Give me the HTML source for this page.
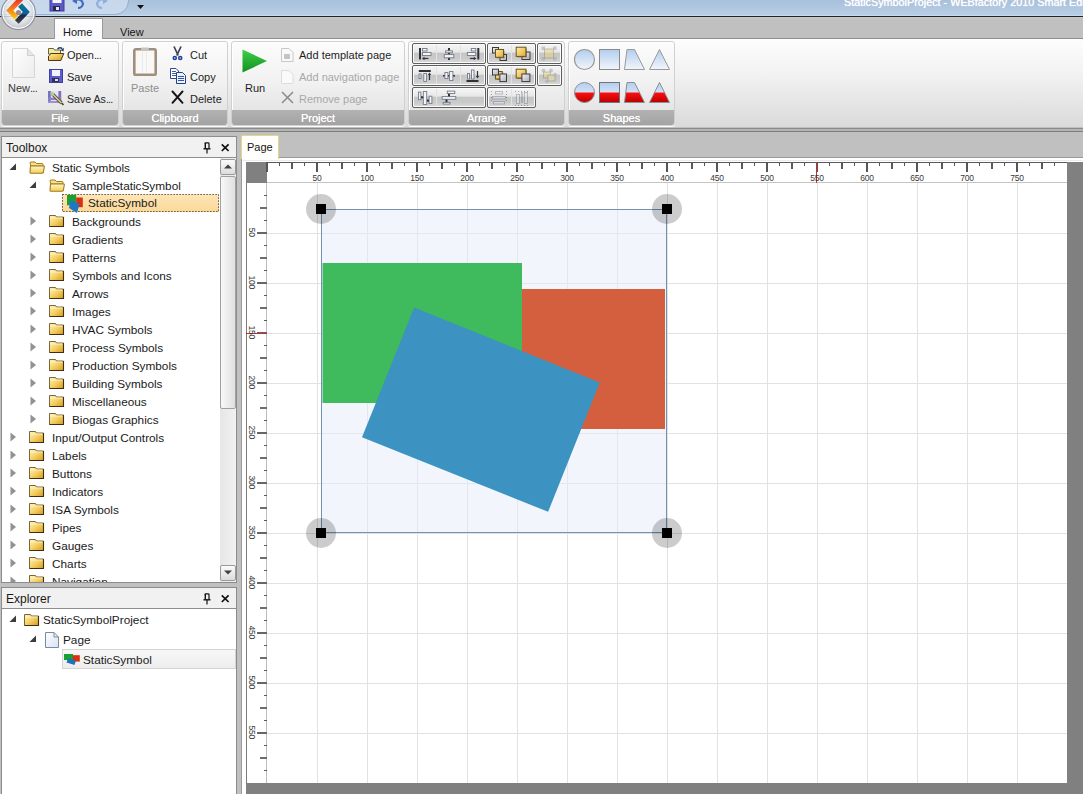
<!DOCTYPE html><html><head><meta charset="utf-8"><style>
*{margin:0;padding:0;box-sizing:border-box}
html,body{width:1083px;height:794px;overflow:hidden;background:#c0c0c0;font-family:"Liberation Sans",sans-serif;position:relative}
.ab{position:absolute}
.t{position:absolute;white-space:nowrap;line-height:1;color:#1e1e1e}
</style></head><body>
<div class="ab" style="left:0;top:0;width:1083px;height:16px;background:linear-gradient(#a9c0da,#b9cfe7)"></div>
<div class="ab" style="left:0;top:15px;width:1083px;height:1px;background:#c6d9ee"></div>
<div class="ab" style="left:0;top:16px;width:1083px;height:1px;background:#1f252b"></div>
<div class="t" style="left:844px;top:-3.5px;font-size:10.8px;color:#fff;text-shadow:0 0 1px #fff">StaticSymbolProject - WEBfactory 2010 Smart Editor</div>
<div class="ab" style="left:-20px;top:-14px;width:149px;height:29px;border:1px solid #98aec9;border-radius:14px;background:linear-gradient(#c4d5ea,#c9d9ee)"></div>
<svg class="ab" style="left:49px;top:-3px" width="16" height="15" viewBox="0 0 16 15">
<rect x="1" y="0" width="14" height="14" fill="#5b5bc8" stroke="#3c3c9c"/>
<rect x="3.5" y="0" width="9" height="6" fill="#f4f4fb"/>
<rect x="4" y="9" width="7" height="5" fill="#2a2a50"/><rect x="7" y="10" width="3" height="3" fill="#e8e8f0"/></svg>
<svg class="ab" style="left:72px;top:-2px" width="14" height="12" viewBox="0 0 14 12">
<path d="M3 2 Q10 0 11 6 Q10 10 6 10" fill="none" stroke="#3e6fc4" stroke-width="2.2"/><path d="M0 3 L5 0 L5 6 Z" fill="#3e6fc4"/></svg>
<svg class="ab" style="left:94px;top:-2px" width="14" height="12" viewBox="0 0 14 12">
<path d="M11 2 Q4 0 3 6 Q4 10 8 10" fill="none" stroke="#8fb0da" stroke-width="2.2"/><path d="M14 3 L9 0 L9 6 Z" fill="#8fb0da"/></svg>
<svg class="ab" style="left:137px;top:5px" width="7" height="4"><path d="M0 0 H7 L3.5 4Z" fill="#101010"/></svg>
<div class="ab" style="left:0;top:17px;width:1083px;height:22px;background:linear-gradient(#c8c8c8,#c0c0c0 3px,#c0c0c0)"></div>
<div class="ab" style="left:0;top:38px;width:1083px;height:1px;background:#8e8e8e"></div>
<div class="ab" style="left:54px;top:18px;width:49px;height:23px;background:linear-gradient(#fefefe,#f9f9f9);border:1px solid #9a9a9a;border-bottom:none;border-radius:1px 1px 0 0"></div>
<div class="t" style="left:63px;top:27px;font-size:11px;color:#151515">Home</div>
<div class="t" style="left:120px;top:27px;font-size:11px;color:#151515">View</div>
<svg class="ab" style="left:0;top:0" width="40" height="34" viewBox="0 0 40 34">
<defs><radialGradient id="lg" cx="50%" cy="45%" r="55%"><stop offset="0" stop-color="#ffffff" stop-opacity=".95"/><stop offset="0.6" stop-color="#eeeff2" stop-opacity=".8"/><stop offset="1" stop-color="#b9bec6" stop-opacity=".85"/></radialGradient>
<linearGradient id="lo" x1="0" y1="0" x2="0" y2="1"><stop offset="0" stop-color="#e8262a"/><stop offset=".45" stop-color="#f26d1f"/><stop offset="1" stop-color="#f9c20a"/></linearGradient>
<linearGradient id="lb" x1="0" y1="0" x2="0" y2="1"><stop offset="0" stop-color="#08768c"/><stop offset=".5" stop-color="#0e5fa0"/><stop offset=".62" stop-color="#1c2a44"/><stop offset="1" stop-color="#3a3f4a"/></linearGradient></defs>
<circle cx="18.4" cy="12.6" r="17" fill="url(#lg)" stroke="#8f959e" stroke-width="1.2"/>
<circle cx="18.4" cy="12.6" r="15.8" fill="none" stroke="#ffffff" stroke-width="1"/>
<polyline points="22,-2.5 9.8,10.5 16.3,17.5" fill="none" stroke="url(#lo)" stroke-width="5.2" stroke-linejoin="miter"/>
<polyline points="20,5 26.3,12 16.8,22" fill="none" stroke="url(#lb)" stroke-width="5.2" stroke-linejoin="miter"/>
<circle cx="18.5" cy="12.5" r="2.6" fill="#9c8a92"/>
</svg>
<div class="ab" style="left:0;top:39px;width:1083px;height:88px;background:linear-gradient(#fdfdfd,#f2f2f2 40%,#dadada)"></div>
<div class="ab" style="left:0;top:128px;width:1083px;height:1px;background:#8a8a8a"></div>
<div class="ab" style="left:0;top:129px;width:1083px;height:2px;background:#b4b4b4"></div>
<div class="ab" style="left:0;top:131px;width:1083px;height:1px;background:#7e7e7e"></div>
<div class="ab" style="left:0;top:132px;width:1083px;height:26px;background:#c0c0c0"></div>
<div class="ab" style="left:1px;top:41px;width:118px;height:85px;border-radius:3px;background:linear-gradient(#fcfcfc,#f1f1f1 50%,#dedede);border:1px solid #d0d0d0;box-shadow:1px 1px 0 #fff inset,0 1px 0 #fff"></div>
<div class="ab" style="left:2px;top:110px;width:116px;height:15px;border-radius:0 0 3px 3px;background:linear-gradient(#b2b2b2,#a3a3a3)"></div>
<div class="t" style="left:1px;width:118px;text-align:center;top:113px;font-size:11px;color:#fff;text-shadow:0 0 .6px #fff">File</div>
<div class="ab" style="left:122px;top:41px;width:106px;height:85px;border-radius:3px;background:linear-gradient(#fcfcfc,#f1f1f1 50%,#dedede);border:1px solid #d0d0d0;box-shadow:1px 1px 0 #fff inset,0 1px 0 #fff"></div>
<div class="ab" style="left:123px;top:110px;width:104px;height:15px;border-radius:0 0 3px 3px;background:linear-gradient(#b2b2b2,#a3a3a3)"></div>
<div class="t" style="left:122px;width:106px;text-align:center;top:113px;font-size:11px;color:#fff;text-shadow:0 0 .6px #fff">Clipboard</div>
<div class="ab" style="left:231px;top:41px;width:174px;height:85px;border-radius:3px;background:linear-gradient(#fcfcfc,#f1f1f1 50%,#dedede);border:1px solid #d0d0d0;box-shadow:1px 1px 0 #fff inset,0 1px 0 #fff"></div>
<div class="ab" style="left:232px;top:110px;width:172px;height:15px;border-radius:0 0 3px 3px;background:linear-gradient(#b2b2b2,#a3a3a3)"></div>
<div class="t" style="left:231px;width:174px;text-align:center;top:113px;font-size:11px;color:#fff;text-shadow:0 0 .6px #fff">Project</div>
<div class="ab" style="left:408px;top:41px;width:157px;height:85px;border-radius:3px;background:linear-gradient(#fcfcfc,#f1f1f1 50%,#dedede);border:1px solid #d0d0d0;box-shadow:1px 1px 0 #fff inset,0 1px 0 #fff"></div>
<div class="ab" style="left:409px;top:110px;width:155px;height:15px;border-radius:0 0 3px 3px;background:linear-gradient(#b2b2b2,#a3a3a3)"></div>
<div class="t" style="left:408px;width:157px;text-align:center;top:113px;font-size:11px;color:#fff;text-shadow:0 0 .6px #fff">Arrange</div>
<div class="ab" style="left:568px;top:41px;width:107px;height:85px;border-radius:3px;background:linear-gradient(#fcfcfc,#f1f1f1 50%,#dedede);border:1px solid #d0d0d0;box-shadow:1px 1px 0 #fff inset,0 1px 0 #fff"></div>
<div class="ab" style="left:569px;top:110px;width:105px;height:15px;border-radius:0 0 3px 3px;background:linear-gradient(#b2b2b2,#a3a3a3)"></div>
<div class="t" style="left:568px;width:107px;text-align:center;top:113px;font-size:11px;color:#fff;text-shadow:0 0 .6px #fff">Shapes</div>
<svg class="ab" style="left:12px;top:48px" width="23" height="30" viewBox="0 0 23 30">
<defs><linearGradient id="pg" x1="0" y1="0" x2="1" y2="1"><stop offset="0" stop-color="#ffffff"/><stop offset="1" stop-color="#ececec"/></linearGradient></defs>
<path d="M0.5 0.5 H15.5 L22.5 7.5 V29.5 H0.5 Z" fill="url(#pg)" stroke="#d6d6d6"/><path d="M15.5 0.5 V7.5 H22.5" fill="#e6e6e6" stroke="#d0d0d0"/></svg>
<div class="t" style="left:8px;top:83px;font-size:11px;color:#3a3a3a">New<span style="letter-spacing:-0.7px">...</span></div>
<svg class="ab" style="left:48px;top:47px" width="17" height="15" viewBox="0 0 17 15">
<defs><linearGradient id="ofg" x1="0" y1="0" x2="1" y2="1"><stop offset="0" stop-color="#fff09a"/><stop offset="1" stop-color="#dc9c1c"/></linearGradient></defs>
<path d="M0.5 1.5 H5.5 L6.5 3 H12.5 V7 H0.5Z" fill="#eeeaa8" stroke="#6e6034" stroke-width="1"/>
<path d="M3.2 6.5 H15.8 L12.8 13.5 H0.5 V9Z" fill="url(#ofg)" stroke="#4a3816" stroke-width="1"/>
<path d="M9.5 2 Q12 -0.3 14.2 1.6" fill="none" stroke="#2c3c70" stroke-width="1.4"/><path d="M15.8 0.8 L15.6 4.6 L12.4 3.2Z" fill="#2c3c70"/></svg>
<div class="t" style="left:67px;top:50px;font-size:11px">Open<span style="letter-spacing:-0.7px">...</span></div>
<svg class="ab" style="left:49px;top:69px" width="14" height="14" viewBox="0 0 14 14">
<rect x="0.5" y="0.5" width="13" height="13" fill="#5c5cd0" stroke="#4040a0"/><rect x="3" y="1" width="8" height="6" fill="#f2f2fb"/>
<rect x="3" y="9" width="7" height="4" fill="#303050"/><rect x="6" y="10" width="3" height="2" fill="#ddd"/></svg>
<div class="t" style="left:67px;top:72px;font-size:11px">Save</div>
<svg class="ab" style="left:48px;top:90px" width="16" height="16" viewBox="0 0 16 16">
<rect x="0" y="1" width="13" height="12" fill="#e6e4f4"/><rect x="0" y="1" width="2.8" height="12" fill="#7a70c4"/><rect x="10.4" y="1" width="2.8" height="12" fill="#7a70c4"/>
<rect x="0" y="7.6" width="13.2" height="2.4" fill="#8c82cc"/><rect x="0" y="11" width="13.2" height="2" fill="#9890d4"/>
<path d="M4.5 4 L13.5 13" stroke="#5a4a30" stroke-width="3.2"/><path d="M4.5 4 L13.5 13" stroke="#d8d0a0" stroke-width="1.6"/>
<path d="M3 2.5 L5.5 5" stroke="#a8d090" stroke-width="3"/><path d="M13.5 13 L15.5 15" stroke="#3a4a2a" stroke-width="1.6"/></svg>
<div class="t" style="left:67px;top:94px;font-size:10.6px">Save As<span style="letter-spacing:-0.7px">...</span></div>
<svg class="ab" style="left:133px;top:46px" width="24" height="30" viewBox="0 0 24 30">
<rect x="1.3" y="3.3" width="21.4" height="25.6" rx="1.5" fill="#fbf8f4" stroke="#9d9080" stroke-width="2.6"/><rect x="9" y="6" width="1" height="21" fill="#e2ecf8"/><rect x="13" y="6" width="1" height="21" fill="#e2ecf8"/>
<rect x="8" y="1.5" width="8" height="2.5" rx="1" fill="#c4c4c4"/></svg>
<div class="t" style="left:131px;top:83px;font-size:11px;color:#8e8e8e">Paste</div>
<svg class="ab" style="left:171px;top:46px" width="13" height="16" viewBox="0 0 13 16">
<path d="M3 0.5 L7.2 9.5 M10 0.5 L5.8 9.5" stroke="#3c3f55" stroke-width="1.7"/><circle cx="3.8" cy="12" r="2.3" fill="#22409c"/><circle cx="9.2" cy="12" r="2.3" fill="#22409c"/><circle cx="3.8" cy="12" r=".8" fill="#dde6f8"/><circle cx="9.2" cy="12" r=".8" fill="#dde6f8"/></svg>
<div class="t" style="left:190px;top:50px;font-size:11px">Cut</div>
<svg class="ab" style="left:170px;top:68px" width="16" height="16" viewBox="0 0 16 16">
<path d="M0.5 0.5 H6 L8.5 3 V10.5 H0.5Z" fill="#fff" stroke="#2c4a8c"/><path d="M2 3.5 H6 M2 5.5 H6 M2 7.5 H6" stroke="#2c4a8c" stroke-width=".9"/>
<path d="M6.5 4.5 H12.5 L15.5 7.5 V15.5 H6.5Z" fill="#eef3fb" stroke="#1f3f8f"/><path d="M8 8.5 H14 M8 10.5 H14 M8 12.5 H14" stroke="#1f3f8f" stroke-width=".9"/></svg>
<div class="t" style="left:190px;top:72px;font-size:11px">Copy</div>
<svg class="ab" style="left:171px;top:90px" width="13" height="14" viewBox="0 0 13 14">
<path d="M1.5 1.5 L11.5 12.8 M11.5 1.5 L1.5 12.8" stroke="#151515" stroke-width="1.9" stroke-linecap="round"/></svg>
<div class="t" style="left:190px;top:94px;font-size:11px">Delete</div>
<svg class="ab" style="left:242px;top:49px" width="26" height="25" viewBox="0 0 26 25">
<defs><linearGradient id="rg" x1="0" y1="0" x2="0" y2="1"><stop offset="0" stop-color="#3fcf4a"/><stop offset="1" stop-color="#11901c"/></linearGradient></defs>
<path d="M0.5 0.5 L25 12 L0.5 23.5Z" fill="url(#rg)"/></svg>
<div class="t" style="left:245px;top:83px;font-size:11px">Run</div>
<svg class="ab" style="left:281px;top:47px" width="13" height="15" viewBox="0 0 13 15">
<path d="M0.5 1.5 H8 L12 5.5 V14.5 H0.5Z" fill="#fafafa" stroke="#c8c8c8"/><rect x="3" y="7" width="6" height="5" fill="#c4c4c4"/></svg>
<div class="t" style="left:299px;top:50px;font-size:11px">Add template page</div>
<svg class="ab" style="left:281px;top:69px" width="13" height="15" viewBox="0 0 13 15">
<path d="M0.5 1.5 H8 L12 5.5 V14.5 H0.5Z" fill="#fafafa" stroke="#dcdcdc"/></svg>
<div class="t" style="left:299px;top:72px;font-size:11px;color:#a8a8a8">Add navigation page</div>
<svg class="ab" style="left:281px;top:91px" width="13" height="13" viewBox="0 0 13 13">
<path d="M1 1 L12 12 M12 1 L1 12" stroke="#8a8a8a" stroke-width="1.5"/></svg>
<div class="t" style="left:299px;top:94px;font-size:11px;color:#a8a8a8">Remove page</div>
<div class="ab" style="left:412px;top:43px;width:74px;height:21px;border:1px solid #5e5e5e;border-radius:2px;background:linear-gradient(#f6f6f6 0%,#e8e8e8 42%,#c6c6c6 50%,#cacaca 75%,#dadada 100%);box-shadow:inset 0 0 0 1px #fafafa"></div>
<div class="ab" style="left:436px;top:45px;width:1px;height:17px;background:#e2e2e2"></div>
<div class="ab" style="left:460px;top:45px;width:1px;height:17px;background:#e2e2e2"></div>
<div class="ab" style="left:412px;top:65px;width:74px;height:21px;border:1px solid #5e5e5e;border-radius:2px;background:linear-gradient(#f6f6f6 0%,#e8e8e8 42%,#c6c6c6 50%,#cacaca 75%,#dadada 100%);box-shadow:inset 0 0 0 1px #fafafa"></div>
<div class="ab" style="left:436px;top:67px;width:1px;height:17px;background:#e2e2e2"></div>
<div class="ab" style="left:460px;top:67px;width:1px;height:17px;background:#e2e2e2"></div>
<div class="ab" style="left:412px;top:87px;width:74px;height:21px;border:1px solid #5e5e5e;border-radius:2px;background:linear-gradient(#f6f6f6 0%,#e8e8e8 42%,#c6c6c6 50%,#cacaca 75%,#dadada 100%);box-shadow:inset 0 0 0 1px #fafafa"></div>
<div class="ab" style="left:436px;top:89px;width:1px;height:17px;background:#e2e2e2"></div>
<div class="ab" style="left:487px;top:43px;width:49px;height:21px;border:1px solid #5e5e5e;border-radius:2px;background:linear-gradient(#f6f6f6 0%,#e8e8e8 42%,#c6c6c6 50%,#cacaca 75%,#dadada 100%);box-shadow:inset 0 0 0 1px #fafafa"></div>
<div class="ab" style="left:511px;top:45px;width:1px;height:17px;background:#e2e2e2"></div>
<div class="ab" style="left:487px;top:65px;width:49px;height:21px;border:1px solid #5e5e5e;border-radius:2px;background:linear-gradient(#f6f6f6 0%,#e8e8e8 42%,#c6c6c6 50%,#cacaca 75%,#dadada 100%);box-shadow:inset 0 0 0 1px #fafafa"></div>
<div class="ab" style="left:511px;top:67px;width:1px;height:17px;background:#e2e2e2"></div>
<div class="ab" style="left:487px;top:87px;width:49px;height:21px;border:1px solid #5e5e5e;border-radius:2px;background:linear-gradient(#f6f6f6 0%,#e8e8e8 42%,#c6c6c6 50%,#cacaca 75%,#dadada 100%);box-shadow:inset 0 0 0 1px #fafafa"></div>
<div class="ab" style="left:511px;top:89px;width:1px;height:17px;background:#e2e2e2"></div>
<div class="ab" style="left:537px;top:43px;width:25px;height:21px;border:1px solid #5e5e5e;border-radius:2px;background:linear-gradient(#f6f6f6 0%,#e8e8e8 42%,#c6c6c6 50%,#cacaca 75%,#dadada 100%);box-shadow:inset 0 0 0 1px #fafafa"></div>
<div class="ab" style="left:537px;top:65px;width:25px;height:21px;border:1px solid #5e5e5e;border-radius:2px;background:linear-gradient(#f6f6f6 0%,#e8e8e8 42%,#c6c6c6 50%,#cacaca 75%,#dadada 100%);box-shadow:inset 0 0 0 1px #fafafa"></div>
<svg class="ab" style="left:412px;top:43px" width="24" height="21" viewBox="0 0 24 21"><rect x="7" y="5" width="2" height="11.5" fill="#2f3338"/><rect x="10.5" y="5.5" width="4.5" height="2.5" fill="#f3f5f9" stroke="#737a86" stroke-width=".9"/><rect x="10.5" y="9.5" width="8.5" height="3" fill="#f3f5f9" stroke="#737a86" stroke-width=".9"/><path d="M11.5 15.5 H16.5" stroke="#2f3338" stroke-width="1.2"/><path d="M10 15.5 L12.5 13.8 V17.2Z" fill="#2f3338"/></svg>
<svg class="ab" style="left:436px;top:43px" width="24" height="21" viewBox="0 0 24 21"><rect x="12" y="5" width="2" height="12" fill="#2f3338"/><rect x="9.6" y="7.8" width="6.8" height="2" fill="#f3f5f9" stroke="#737a86" stroke-width=".9"/><rect x="8.2" y="11.6" width="9.6" height="3.2" fill="#f3f5f9" stroke="#737a86" stroke-width=".9"/></svg>
<svg class="ab" style="left:460px;top:43px" width="24" height="21" viewBox="0 0 24 21"><rect x="17.3" y="5" width="2" height="11.5" fill="#2f3338"/><rect x="11.3" y="5.5" width="4.5" height="2.5" fill="#f3f5f9" stroke="#737a86" stroke-width=".9"/><rect x="7.3" y="9.5" width="8.5" height="3" fill="#f3f5f9" stroke="#737a86" stroke-width=".9"/><path d="M9.8 15.5 H14.8" stroke="#2f3338" stroke-width="1.2"/><path d="M16.3 15.5 L13.8 13.8 V17.2Z" fill="#2f3338"/></svg>
<svg class="ab" style="left:412px;top:65px" width="24" height="21" viewBox="0 0 24 21"><rect x="6.8" y="5" width="12" height="2" fill="#2f3338"/><rect x="7" y="9" width="2" height="4.5" fill="#f3f5f9" stroke="#737a86" stroke-width=".9"/><rect x="11.8" y="8.5" width="2.6" height="8" fill="#f3f5f9" stroke="#737a86" stroke-width=".9"/><path d="M17.5 9 V15" stroke="#2f3338" stroke-width="1.2"/><path d="M17.5 7.5 L15.8 10 H19.2Z" fill="#2f3338"/></svg>
<svg class="ab" style="left:436px;top:65px" width="24" height="21" viewBox="0 0 24 21"><rect x="7" y="10" width="12" height="1.6" fill="#2f3338"/><rect x="8.9" y="7.5" width="3" height="6" fill="#f3f5f9" stroke="#737a86" stroke-width=".9"/><rect x="13.6" y="6.5" width="3.3" height="9" fill="#f3f5f9" stroke="#737a86" stroke-width=".9"/></svg>
<svg class="ab" style="left:460px;top:65px" width="24" height="21" viewBox="0 0 24 21"><rect x="6.5" y="15" width="12" height="2" fill="#2f3338"/><rect x="7.5" y="8.5" width="2" height="5.5" fill="#f3f5f9" stroke="#737a86" stroke-width=".9"/><rect x="11.5" y="5" width="2.5" height="9" fill="#f3f5f9" stroke="#737a86" stroke-width=".9"/><path d="M17.5 6 V12" stroke="#2f3338" stroke-width="1.2"/><path d="M17.5 13.5 L15.8 11 H19.2Z" fill="#2f3338"/></svg>
<svg class="ab" style="left:412px;top:87px" width="24" height="21" viewBox="0 0 24 21"><rect x="6.5" y="5.1" width="2.4" height="7.6" fill="#f3f5f9" stroke="#737a86" stroke-width=".9"/><rect x="11.3" y="4.5" width="3.4" height="13" fill="#f3f5f9" stroke="#737a86" stroke-width=".9"/><rect x="17.1" y="9.2" width="2.8" height="7.2" fill="#f3f5f9" stroke="#737a86" stroke-width=".9"/><rect x="9" y="9.3" width="2.2" height="2" fill="#2f3338"/><rect x="15" y="12.6" width="2" height="2" fill="#2f3338"/></svg>
<svg class="ab" style="left:436px;top:87px" width="24" height="21" viewBox="0 0 24 21"><rect x="11.3" y="4.1" width="7.5" height="2.4" fill="#f3f5f9" stroke="#737a86" stroke-width=".9"/><rect x="6.1" y="9.6" width="13.7" height="2.7" fill="#f3f5f9" stroke="#737a86" stroke-width=".9"/><rect x="7.2" y="15.4" width="6.8" height="1.7" fill="#f3f5f9" stroke="#737a86" stroke-width=".9"/><rect x="12" y="6.8" width="2" height="2.5" fill="#2f3338"/><rect x="9.5" y="12.5" width="2" height="2.5" fill="#2f3338"/></svg>
<svg class="ab" style="left:487px;top:43px" width="24" height="21" viewBox="0 0 24 21"><defs><linearGradient id="yg1" x1="0" y1="0" x2="1" y2="1"><stop offset="0" stop-color="#fff0a8"/><stop offset="1" stop-color="#e2a82e"/></linearGradient><linearGradient id="gg1" x1="0" y1="0" x2="1" y2="1"><stop offset="0" stop-color="#f4f5f8"/><stop offset="1" stop-color="#a9aeb8"/></linearGradient></defs><rect x="5.5" y="4.5" width="6" height="5.5" fill="url(#gg1)" stroke="#3a3a3a" stroke-width="1"/><rect x="13" y="11.5" width="6.5" height="6" fill="url(#gg1)" stroke="#3a3a3a" stroke-width="1"/><rect x="9.5" y="7.5" width="8" height="7.8" fill="#5a4a2a" opacity=".55"/><rect x="8.5" y="6.5" width="8" height="7.8" fill="url(#yg1)" stroke="#6b5320" stroke-width="1"/></svg>
<svg class="ab" style="left:511px;top:43px" width="24" height="21" viewBox="0 0 24 21"><defs><linearGradient id="yg2" x1="0" y1="0" x2="1" y2="1"><stop offset="0" stop-color="#fff0a8"/><stop offset="1" stop-color="#e2a82e"/></linearGradient><linearGradient id="gg2" x1="0" y1="0" x2="1" y2="1"><stop offset="0" stop-color="#f4f5f8"/><stop offset="1" stop-color="#a9aeb8"/></linearGradient></defs><rect x="11" y="9" width="8" height="7.5" fill="url(#gg2)" stroke="#3a3a3a" stroke-width="1"/><rect x="6.2" y="5.2" width="9.7" height="9.2" fill="#5a4a2a" opacity=".55"/><rect x="5.2" y="4.2" width="9.7" height="9.2" fill="url(#yg2)" stroke="#6b5320" stroke-width="1"/></svg>
<svg class="ab" style="left:487px;top:65px" width="24" height="21" viewBox="0 0 24 21"><defs><linearGradient id="yg3" x1="0" y1="0" x2="1" y2="1"><stop offset="0" stop-color="#fff0a8"/><stop offset="1" stop-color="#e2a82e"/></linearGradient><linearGradient id="gg3" x1="0" y1="0" x2="1" y2="1"><stop offset="0" stop-color="#f4f5f8"/><stop offset="1" stop-color="#a9aeb8"/></linearGradient></defs><rect x="9.5" y="7.5" width="6.8" height="7.5" fill="#5a4a2a" opacity=".55"/><rect x="8.5" y="6.5" width="6.8" height="7.5" fill="url(#yg3)" stroke="#6b5320" stroke-width="1"/><rect x="5.5" y="4.2" width="6" height="5.8" fill="url(#gg3)" stroke="#3a3a3a" stroke-width="1"/><rect x="12.9" y="9" width="6.6" height="7.6" fill="url(#gg3)" stroke="#3a3a3a" stroke-width="1"/></svg>
<svg class="ab" style="left:511px;top:65px" width="24" height="21" viewBox="0 0 24 21"><defs><linearGradient id="yg4" x1="0" y1="0" x2="1" y2="1"><stop offset="0" stop-color="#fff0a8"/><stop offset="1" stop-color="#e2a82e"/></linearGradient><linearGradient id="gg4" x1="0" y1="0" x2="1" y2="1"><stop offset="0" stop-color="#f4f5f8"/><stop offset="1" stop-color="#a9aeb8"/></linearGradient></defs><rect x="6.2" y="5.2" width="9.7" height="8.8" fill="#5a4a2a" opacity=".55"/><rect x="5.2" y="4.2" width="9.7" height="8.8" fill="url(#yg4)" stroke="#6b5320" stroke-width="1"/><rect x="10.9" y="9" width="8" height="7.6" fill="url(#gg4)" stroke="#3a3a3a" stroke-width="1"/></svg>
<svg class="ab" style="left:487px;top:87px" width="24" height="21" viewBox="0 0 24 21"><g opacity=".45" stroke="#6a7384" stroke-width=".9" fill="#e8eef8"><rect x="8.5" y="4.5" width="7" height="2.5"/><rect x="5.5" y="9.5" width="13" height="2.5"/><rect x="6.5" y="14.5" width="11" height="2.5"/></g><g opacity=".5" fill="#555"><rect x="4" y="4" width="1" height="1"/><rect x="4" y="7" width="1" height="1"/><rect x="4" y="10" width="1" height="1"/><rect x="4" y="13" width="1" height="1"/><rect x="19" y="4" width="1" height="1"/><rect x="19" y="7" width="1" height="1"/><rect x="19" y="10" width="1" height="1"/><rect x="19" y="13" width="1" height="1"/></g></svg>
<svg class="ab" style="left:511px;top:87px" width="24" height="21" viewBox="0 0 24 21"><g opacity=".45" stroke="#6a7384" stroke-width=".9" fill="#e8eef8"><rect x="5.5" y="7.5" width="3" height="9"/><rect x="13.5" y="5.5" width="3" height="11"/></g><path d="M11 5 V16" stroke="#555" opacity=".5"/><g opacity=".5" fill="#555"><rect x="4" y="4" width="1" height="1"/><rect x="7" y="4" width="1" height="1"/><rect x="10" y="4" width="1" height="1"/><rect x="13" y="4" width="1" height="1"/><rect x="16" y="4" width="1" height="1"/><rect x="4" y="18" width="1" height="1"/><rect x="7" y="18" width="1" height="1"/><rect x="10" y="18" width="1" height="1"/><rect x="13" y="18" width="1" height="1"/><rect x="16" y="18" width="1" height="1"/></g></svg>
<svg class="ab" style="left:537px;top:43px" width="24" height="21" viewBox="0 0 24 21"><g opacity=".5"><rect x="4.5" y="3.5" width="3.5" height="3.5" fill="#9aa2b0"/><rect x="16" y="3.5" width="3.5" height="3.5" fill="#9aa2b0"/><rect x="4.5" y="14" width="3.5" height="3.5" fill="#9aa2b0"/><rect x="16" y="14" width="3.5" height="3.5" fill="#9aa2b0"/><rect x="7.5" y="6" width="9" height="9" fill="#e8d48a" stroke="#8a7a50" stroke-width=".8"/></g></svg>
<svg class="ab" style="left:537px;top:65px" width="24" height="21" viewBox="0 0 24 21"><g opacity=".5"><circle cx="6.5" cy="5.5" r="2" fill="#9aa2b0"/><circle cx="14" cy="5.5" r="2" fill="#9aa2b0"/><rect x="6.5" y="7" width="7" height="6" fill="#e8d48a" stroke="#8a7a50" stroke-width=".8"/><rect x="11" y="10" width="7" height="6" fill="#efe0a0" stroke="#8a7a50" stroke-width=".8"/><circle cx="18" cy="9.5" r="1.8" fill="#9aa2b0"/><circle cx="10" cy="16.5" r="1.8" fill="#9aa2b0"/></g></svg>
<svg class="ab" style="left:572px;top:47px" width="100" height="58" viewBox="0 0 100 58">
<defs><linearGradient id="sg" x1="0" y1="0" x2="0" y2="1"><stop offset="0" stop-color="#b3cdee"/><stop offset="1" stop-color="#f2f6fb"/></linearGradient>
<linearGradient id="sr" x1="0" y1="0" x2="0" y2="1"><stop offset="0.5" stop-color="#ff1010"/><stop offset="1" stop-color="#b80000"/></linearGradient>
<clipPath id="half"><rect x="0" y="45.5" width="100" height="20"/></clipPath></defs>
<circle cx="12.5" cy="12.5" r="10" fill="url(#sg)" stroke="#9a9a9a" stroke-width="1.2"/>
<rect x="27.5" y="2.5" width="20" height="20" fill="url(#sg)" stroke="#8a8a8a" stroke-width="1"/>
<path d="M55 2.5 H62.5 L72.5 22.5 H52.5Z" fill="url(#sg)" stroke="#9a9a9a" stroke-width="1"/>
<path d="M87.5 2.5 L97.5 22.5 H77.5Z" fill="url(#sg)" stroke="#9a9a9a" stroke-width="1"/>
<g transform="translate(0,33)">
<circle cx="12.5" cy="12.5" r="10" fill="url(#sg)"/>
<rect x="27.5" y="2.5" width="20" height="20" fill="url(#sg)"/>
<path d="M55 2.5 H62.5 L72.5 22.5 H52.5Z" fill="url(#sg)"/>
<path d="M87.5 2.5 L97.5 22.5 H77.5Z" fill="url(#sg)"/>
</g>
<g clip-path="url(#half)">
<circle cx="12.5" cy="45.5" r="10" fill="url(#sr)"/>
<rect x="27.5" y="35.5" width="20" height="20" fill="url(#sr)"/>
<path d="M55 35.5 H62.5 L72.5 55.5 H52.5Z" fill="url(#sr)"/>
<path d="M87.5 35.5 L97.5 55.5 H77.5Z" fill="url(#sr)"/>
</g>
<g transform="translate(0,33)" fill="none" stroke-width="1">
<circle cx="12.5" cy="12.5" r="10" stroke="#8c8f96"/>
<rect x="27.5" y="2.5" width="20" height="20" stroke="#6e7480"/>
<path d="M55 2.5 H62.5 L72.5 22.5 H52.5Z" stroke="#8a8f98"/>
<path d="M87.5 2.5 L97.5 22.5 H77.5Z" stroke="#8a8f98"/>
</g>
</svg>
<div class="ab" style="left:1px;top:136px;width:236px;height:447px;background:#fff;border:1px solid #8c8c8c"></div>
<div class="ab" style="left:2px;top:137px;width:234px;height:21px;background:#f1f1f1;border-bottom:1px solid #8e8e8e"></div>
<div class="t" style="left:6px;top:142px;font-size:12px;color:#1a1a1a">Toolbox</div>
<svg class="ab" style="left:202px;top:142px" width="10" height="12" viewBox="0 0 10 12"><path d="M3 1.5 Q3 0.8 3.8 0.8 H6.2 Q7 0.8 7 1.5 V6.5" stroke="#111" stroke-width="1.2" fill="none"/><path d="M2.6 1 V6.5 H4 V1Z" fill="#111"/><path d="M1.5 6.8 H8.5" stroke="#111" stroke-width="1.4"/><path d="M5 7 V11.5" stroke="#111" stroke-width="1.2"/></svg>
<svg class="ab" style="left:220px;top:143px" width="10" height="9" viewBox="0 0 10 9"><path d="M1.8 1.3 L8.6 8 M8.6 1.3 L1.8 8" stroke="#111" stroke-width="1.7"/></svg>
<div class="ab" style="left:220px;top:158px;width:16px;height:424px;background:linear-gradient(90deg,#e6e6e6,#f2f2f2)"></div>
<div class="ab" style="left:220px;top:159px;width:16px;height:16px;border:1px solid #9a9a9a;border-radius:2px;background:linear-gradient(#fbfbfb,#dcdcdc)"></div>
<svg class="ab" style="left:224px;top:164px" width="8" height="5"><path d="M0 4.5 L4 0.5 L8 4.5Z" fill="#404040"/></svg>
<div class="ab" style="left:220px;top:176px;width:16px;height:233px;border:1px solid #a0a0a0;border-radius:2px;background:linear-gradient(90deg,#f8f8f8,#e0e0e0)"></div>
<div class="ab" style="left:220px;top:565px;width:16px;height:16px;border:1px solid #9a9a9a;border-radius:2px;background:linear-gradient(#fbfbfb,#dcdcdc)"></div>
<svg class="ab" style="left:224px;top:570px" width="8" height="5"><path d="M0 0.5 L4 4.5 L8 0.5Z" fill="#404040"/></svg>
<svg class="ab" style="left:9px;top:163px" width="8" height="8" viewBox="0 0 8 8"><path d="M7 0.5 V7 H0.5Z" fill="#3c3c3c"/></svg>
<svg class="ab" style="left:29px;top:161px" width="16" height="13" viewBox="0 0 16 13">
<defs><linearGradient id="fo29161" x1="0" y1="0" x2="0" y2="1"><stop offset="0" stop-color="#fff6c4"/><stop offset="1" stop-color="#f0cd58"/></linearGradient></defs>
<path d="M1 2 Q1 1 2 1 H6 L7.5 2.5 H13 Q14 2.5 14 3.5 V5 H2 Z" fill="#f7e08a" stroke="#a27a20" stroke-width="1"/>
<path d="M1.5 5 H15 Q15.5 5 15.3 5.8 L14.3 11.5 Q14 12.3 13 12.3 H2 Q1 12.3 1 11.3 Z" fill="url(#fo29161)" stroke="#a27a20" stroke-width="1.1"/></svg>
<div class="t" style="left:52px;top:162.5px;font-size:11.8px;color:#1a1a1a">Static Symbols</div>
<svg class="ab" style="left:29px;top:181px" width="8" height="8" viewBox="0 0 8 8"><path d="M7 0.5 V7 H0.5Z" fill="#3c3c3c"/></svg>
<svg class="ab" style="left:49px;top:179px" width="16" height="13" viewBox="0 0 16 13">
<defs><linearGradient id="fo49179" x1="0" y1="0" x2="0" y2="1"><stop offset="0" stop-color="#fff6c4"/><stop offset="1" stop-color="#f0cd58"/></linearGradient></defs>
<path d="M1 2 Q1 1 2 1 H6 L7.5 2.5 H13 Q14 2.5 14 3.5 V5 H2 Z" fill="#f7e08a" stroke="#a27a20" stroke-width="1"/>
<path d="M1.5 5 H15 Q15.5 5 15.3 5.8 L14.3 11.5 Q14 12.3 13 12.3 H2 Q1 12.3 1 11.3 Z" fill="url(#fo49179)" stroke="#a27a20" stroke-width="1.1"/></svg>
<div class="t" style="left:72px;top:180.5px;font-size:11.8px;color:#1a1a1a">SampleStaticSymbol</div>
<div class="ab" style="left:62px;top:194px;width:157px;height:18px;background:linear-gradient(#fde6b8,#fbd898)"></div>
<svg class="ab" style="left:62px;top:194px" width="157" height="18"><rect x="0.5" y="0.5" width="156" height="17" fill="none" stroke="#3a3020" stroke-dasharray="1.2 1.8"/></svg>
<svg class="ab" style="left:67px;top:194.5px" width="17" height="19" viewBox="0 0 17 19">
<rect x="0" y="0" width="9.2" height="10.3" fill="#18a030"/><rect x="9.2" y="2.5" width="6.6" height="9.7" fill="#d83010"/>
<path d="M3.5 5 L12.5 9 L10 18 L2 13Z" fill="#1f78c0"/></svg>
<div class="t" style="left:88px;top:198px;font-size:11.8px;color:#1a1a1a">StaticSymbol</div>
<svg class="ab" style="left:30px;top:216px" width="7" height="10" viewBox="0 0 7 10"><path d="M0.5 0.5 L6 5 L0.5 9.5Z" fill="#929292"/></svg>
<svg class="ab" style="left:49px;top:215px" width="16" height="13" viewBox="0 0 16 13">
<defs><linearGradient id="fc49215" x1="0" y1="0" x2="1" y2="1"><stop offset="0" stop-color="#fff6c0"/><stop offset="0.55" stop-color="#f3cc5c"/><stop offset="1" stop-color="#d49a22"/></linearGradient></defs>
<path d="M0.5 0.5 H6.5 L7.5 2 H14.5 V11.5 H0.5Z" fill="url(#fc49215)" stroke="#7a6638" stroke-width="1"/><path d="M14.5 2 V11.5 H0.5" fill="none" stroke="#3e2e12" stroke-width="1.1"/><path d="M1.5 3 H13.5" stroke="#fff8d0" stroke-width=".8"/></svg>
<div class="t" style="left:72px;top:216.5px;font-size:11.8px;color:#1a1a1a">Backgrounds</div>
<svg class="ab" style="left:30px;top:234px" width="7" height="10" viewBox="0 0 7 10"><path d="M0.5 0.5 L6 5 L0.5 9.5Z" fill="#929292"/></svg>
<svg class="ab" style="left:49px;top:233px" width="16" height="13" viewBox="0 0 16 13">
<defs><linearGradient id="fc49233" x1="0" y1="0" x2="1" y2="1"><stop offset="0" stop-color="#fff6c0"/><stop offset="0.55" stop-color="#f3cc5c"/><stop offset="1" stop-color="#d49a22"/></linearGradient></defs>
<path d="M0.5 0.5 H6.5 L7.5 2 H14.5 V11.5 H0.5Z" fill="url(#fc49233)" stroke="#7a6638" stroke-width="1"/><path d="M14.5 2 V11.5 H0.5" fill="none" stroke="#3e2e12" stroke-width="1.1"/><path d="M1.5 3 H13.5" stroke="#fff8d0" stroke-width=".8"/></svg>
<div class="t" style="left:72px;top:234.5px;font-size:11.8px;color:#1a1a1a">Gradients</div>
<svg class="ab" style="left:30px;top:252px" width="7" height="10" viewBox="0 0 7 10"><path d="M0.5 0.5 L6 5 L0.5 9.5Z" fill="#929292"/></svg>
<svg class="ab" style="left:49px;top:251px" width="16" height="13" viewBox="0 0 16 13">
<defs><linearGradient id="fc49251" x1="0" y1="0" x2="1" y2="1"><stop offset="0" stop-color="#fff6c0"/><stop offset="0.55" stop-color="#f3cc5c"/><stop offset="1" stop-color="#d49a22"/></linearGradient></defs>
<path d="M0.5 0.5 H6.5 L7.5 2 H14.5 V11.5 H0.5Z" fill="url(#fc49251)" stroke="#7a6638" stroke-width="1"/><path d="M14.5 2 V11.5 H0.5" fill="none" stroke="#3e2e12" stroke-width="1.1"/><path d="M1.5 3 H13.5" stroke="#fff8d0" stroke-width=".8"/></svg>
<div class="t" style="left:72px;top:252.5px;font-size:11.8px;color:#1a1a1a">Patterns</div>
<svg class="ab" style="left:30px;top:270px" width="7" height="10" viewBox="0 0 7 10"><path d="M0.5 0.5 L6 5 L0.5 9.5Z" fill="#929292"/></svg>
<svg class="ab" style="left:49px;top:269px" width="16" height="13" viewBox="0 0 16 13">
<defs><linearGradient id="fc49269" x1="0" y1="0" x2="1" y2="1"><stop offset="0" stop-color="#fff6c0"/><stop offset="0.55" stop-color="#f3cc5c"/><stop offset="1" stop-color="#d49a22"/></linearGradient></defs>
<path d="M0.5 0.5 H6.5 L7.5 2 H14.5 V11.5 H0.5Z" fill="url(#fc49269)" stroke="#7a6638" stroke-width="1"/><path d="M14.5 2 V11.5 H0.5" fill="none" stroke="#3e2e12" stroke-width="1.1"/><path d="M1.5 3 H13.5" stroke="#fff8d0" stroke-width=".8"/></svg>
<div class="t" style="left:72px;top:270.5px;font-size:11.8px;color:#1a1a1a">Symbols and Icons</div>
<svg class="ab" style="left:30px;top:288px" width="7" height="10" viewBox="0 0 7 10"><path d="M0.5 0.5 L6 5 L0.5 9.5Z" fill="#929292"/></svg>
<svg class="ab" style="left:49px;top:287px" width="16" height="13" viewBox="0 0 16 13">
<defs><linearGradient id="fc49287" x1="0" y1="0" x2="1" y2="1"><stop offset="0" stop-color="#fff6c0"/><stop offset="0.55" stop-color="#f3cc5c"/><stop offset="1" stop-color="#d49a22"/></linearGradient></defs>
<path d="M0.5 0.5 H6.5 L7.5 2 H14.5 V11.5 H0.5Z" fill="url(#fc49287)" stroke="#7a6638" stroke-width="1"/><path d="M14.5 2 V11.5 H0.5" fill="none" stroke="#3e2e12" stroke-width="1.1"/><path d="M1.5 3 H13.5" stroke="#fff8d0" stroke-width=".8"/></svg>
<div class="t" style="left:72px;top:288.5px;font-size:11.8px;color:#1a1a1a">Arrows</div>
<svg class="ab" style="left:30px;top:306px" width="7" height="10" viewBox="0 0 7 10"><path d="M0.5 0.5 L6 5 L0.5 9.5Z" fill="#929292"/></svg>
<svg class="ab" style="left:49px;top:305px" width="16" height="13" viewBox="0 0 16 13">
<defs><linearGradient id="fc49305" x1="0" y1="0" x2="1" y2="1"><stop offset="0" stop-color="#fff6c0"/><stop offset="0.55" stop-color="#f3cc5c"/><stop offset="1" stop-color="#d49a22"/></linearGradient></defs>
<path d="M0.5 0.5 H6.5 L7.5 2 H14.5 V11.5 H0.5Z" fill="url(#fc49305)" stroke="#7a6638" stroke-width="1"/><path d="M14.5 2 V11.5 H0.5" fill="none" stroke="#3e2e12" stroke-width="1.1"/><path d="M1.5 3 H13.5" stroke="#fff8d0" stroke-width=".8"/></svg>
<div class="t" style="left:72px;top:306.5px;font-size:11.8px;color:#1a1a1a">Images</div>
<svg class="ab" style="left:30px;top:324px" width="7" height="10" viewBox="0 0 7 10"><path d="M0.5 0.5 L6 5 L0.5 9.5Z" fill="#929292"/></svg>
<svg class="ab" style="left:49px;top:323px" width="16" height="13" viewBox="0 0 16 13">
<defs><linearGradient id="fc49323" x1="0" y1="0" x2="1" y2="1"><stop offset="0" stop-color="#fff6c0"/><stop offset="0.55" stop-color="#f3cc5c"/><stop offset="1" stop-color="#d49a22"/></linearGradient></defs>
<path d="M0.5 0.5 H6.5 L7.5 2 H14.5 V11.5 H0.5Z" fill="url(#fc49323)" stroke="#7a6638" stroke-width="1"/><path d="M14.5 2 V11.5 H0.5" fill="none" stroke="#3e2e12" stroke-width="1.1"/><path d="M1.5 3 H13.5" stroke="#fff8d0" stroke-width=".8"/></svg>
<div class="t" style="left:72px;top:324.5px;font-size:11.8px;color:#1a1a1a">HVAC Symbols</div>
<svg class="ab" style="left:30px;top:342px" width="7" height="10" viewBox="0 0 7 10"><path d="M0.5 0.5 L6 5 L0.5 9.5Z" fill="#929292"/></svg>
<svg class="ab" style="left:49px;top:341px" width="16" height="13" viewBox="0 0 16 13">
<defs><linearGradient id="fc49341" x1="0" y1="0" x2="1" y2="1"><stop offset="0" stop-color="#fff6c0"/><stop offset="0.55" stop-color="#f3cc5c"/><stop offset="1" stop-color="#d49a22"/></linearGradient></defs>
<path d="M0.5 0.5 H6.5 L7.5 2 H14.5 V11.5 H0.5Z" fill="url(#fc49341)" stroke="#7a6638" stroke-width="1"/><path d="M14.5 2 V11.5 H0.5" fill="none" stroke="#3e2e12" stroke-width="1.1"/><path d="M1.5 3 H13.5" stroke="#fff8d0" stroke-width=".8"/></svg>
<div class="t" style="left:72px;top:342.5px;font-size:11.8px;color:#1a1a1a">Process Symbols</div>
<svg class="ab" style="left:30px;top:360px" width="7" height="10" viewBox="0 0 7 10"><path d="M0.5 0.5 L6 5 L0.5 9.5Z" fill="#929292"/></svg>
<svg class="ab" style="left:49px;top:359px" width="16" height="13" viewBox="0 0 16 13">
<defs><linearGradient id="fc49359" x1="0" y1="0" x2="1" y2="1"><stop offset="0" stop-color="#fff6c0"/><stop offset="0.55" stop-color="#f3cc5c"/><stop offset="1" stop-color="#d49a22"/></linearGradient></defs>
<path d="M0.5 0.5 H6.5 L7.5 2 H14.5 V11.5 H0.5Z" fill="url(#fc49359)" stroke="#7a6638" stroke-width="1"/><path d="M14.5 2 V11.5 H0.5" fill="none" stroke="#3e2e12" stroke-width="1.1"/><path d="M1.5 3 H13.5" stroke="#fff8d0" stroke-width=".8"/></svg>
<div class="t" style="left:72px;top:360.5px;font-size:11.8px;color:#1a1a1a">Production Symbols</div>
<svg class="ab" style="left:30px;top:378px" width="7" height="10" viewBox="0 0 7 10"><path d="M0.5 0.5 L6 5 L0.5 9.5Z" fill="#929292"/></svg>
<svg class="ab" style="left:49px;top:377px" width="16" height="13" viewBox="0 0 16 13">
<defs><linearGradient id="fc49377" x1="0" y1="0" x2="1" y2="1"><stop offset="0" stop-color="#fff6c0"/><stop offset="0.55" stop-color="#f3cc5c"/><stop offset="1" stop-color="#d49a22"/></linearGradient></defs>
<path d="M0.5 0.5 H6.5 L7.5 2 H14.5 V11.5 H0.5Z" fill="url(#fc49377)" stroke="#7a6638" stroke-width="1"/><path d="M14.5 2 V11.5 H0.5" fill="none" stroke="#3e2e12" stroke-width="1.1"/><path d="M1.5 3 H13.5" stroke="#fff8d0" stroke-width=".8"/></svg>
<div class="t" style="left:72px;top:378.5px;font-size:11.8px;color:#1a1a1a">Building Symbols</div>
<svg class="ab" style="left:30px;top:396px" width="7" height="10" viewBox="0 0 7 10"><path d="M0.5 0.5 L6 5 L0.5 9.5Z" fill="#929292"/></svg>
<svg class="ab" style="left:49px;top:395px" width="16" height="13" viewBox="0 0 16 13">
<defs><linearGradient id="fc49395" x1="0" y1="0" x2="1" y2="1"><stop offset="0" stop-color="#fff6c0"/><stop offset="0.55" stop-color="#f3cc5c"/><stop offset="1" stop-color="#d49a22"/></linearGradient></defs>
<path d="M0.5 0.5 H6.5 L7.5 2 H14.5 V11.5 H0.5Z" fill="url(#fc49395)" stroke="#7a6638" stroke-width="1"/><path d="M14.5 2 V11.5 H0.5" fill="none" stroke="#3e2e12" stroke-width="1.1"/><path d="M1.5 3 H13.5" stroke="#fff8d0" stroke-width=".8"/></svg>
<div class="t" style="left:72px;top:396.5px;font-size:11.8px;color:#1a1a1a">Miscellaneous</div>
<svg class="ab" style="left:30px;top:414px" width="7" height="10" viewBox="0 0 7 10"><path d="M0.5 0.5 L6 5 L0.5 9.5Z" fill="#929292"/></svg>
<svg class="ab" style="left:49px;top:413px" width="16" height="13" viewBox="0 0 16 13">
<defs><linearGradient id="fc49413" x1="0" y1="0" x2="1" y2="1"><stop offset="0" stop-color="#fff6c0"/><stop offset="0.55" stop-color="#f3cc5c"/><stop offset="1" stop-color="#d49a22"/></linearGradient></defs>
<path d="M0.5 0.5 H6.5 L7.5 2 H14.5 V11.5 H0.5Z" fill="url(#fc49413)" stroke="#7a6638" stroke-width="1"/><path d="M14.5 2 V11.5 H0.5" fill="none" stroke="#3e2e12" stroke-width="1.1"/><path d="M1.5 3 H13.5" stroke="#fff8d0" stroke-width=".8"/></svg>
<div class="t" style="left:72px;top:414.5px;font-size:11.8px;color:#1a1a1a">Biogas Graphics</div>
<svg class="ab" style="left:10px;top:432px" width="7" height="10" viewBox="0 0 7 10"><path d="M0.5 0.5 L6 5 L0.5 9.5Z" fill="#929292"/></svg>
<svg class="ab" style="left:29px;top:431px" width="16" height="13" viewBox="0 0 16 13">
<defs><linearGradient id="fc29431" x1="0" y1="0" x2="1" y2="1"><stop offset="0" stop-color="#fff6c0"/><stop offset="0.55" stop-color="#f3cc5c"/><stop offset="1" stop-color="#d49a22"/></linearGradient></defs>
<path d="M0.5 0.5 H6.5 L7.5 2 H14.5 V11.5 H0.5Z" fill="url(#fc29431)" stroke="#7a6638" stroke-width="1"/><path d="M14.5 2 V11.5 H0.5" fill="none" stroke="#3e2e12" stroke-width="1.1"/><path d="M1.5 3 H13.5" stroke="#fff8d0" stroke-width=".8"/></svg>
<div class="t" style="left:52px;top:432.5px;font-size:11.8px;color:#1a1a1a">Input/Output Controls</div>
<svg class="ab" style="left:10px;top:450px" width="7" height="10" viewBox="0 0 7 10"><path d="M0.5 0.5 L6 5 L0.5 9.5Z" fill="#929292"/></svg>
<svg class="ab" style="left:29px;top:449px" width="16" height="13" viewBox="0 0 16 13">
<defs><linearGradient id="fc29449" x1="0" y1="0" x2="1" y2="1"><stop offset="0" stop-color="#fff6c0"/><stop offset="0.55" stop-color="#f3cc5c"/><stop offset="1" stop-color="#d49a22"/></linearGradient></defs>
<path d="M0.5 0.5 H6.5 L7.5 2 H14.5 V11.5 H0.5Z" fill="url(#fc29449)" stroke="#7a6638" stroke-width="1"/><path d="M14.5 2 V11.5 H0.5" fill="none" stroke="#3e2e12" stroke-width="1.1"/><path d="M1.5 3 H13.5" stroke="#fff8d0" stroke-width=".8"/></svg>
<div class="t" style="left:52px;top:450.5px;font-size:11.8px;color:#1a1a1a">Labels</div>
<svg class="ab" style="left:10px;top:468px" width="7" height="10" viewBox="0 0 7 10"><path d="M0.5 0.5 L6 5 L0.5 9.5Z" fill="#929292"/></svg>
<svg class="ab" style="left:29px;top:467px" width="16" height="13" viewBox="0 0 16 13">
<defs><linearGradient id="fc29467" x1="0" y1="0" x2="1" y2="1"><stop offset="0" stop-color="#fff6c0"/><stop offset="0.55" stop-color="#f3cc5c"/><stop offset="1" stop-color="#d49a22"/></linearGradient></defs>
<path d="M0.5 0.5 H6.5 L7.5 2 H14.5 V11.5 H0.5Z" fill="url(#fc29467)" stroke="#7a6638" stroke-width="1"/><path d="M14.5 2 V11.5 H0.5" fill="none" stroke="#3e2e12" stroke-width="1.1"/><path d="M1.5 3 H13.5" stroke="#fff8d0" stroke-width=".8"/></svg>
<div class="t" style="left:52px;top:468.5px;font-size:11.8px;color:#1a1a1a">Buttons</div>
<svg class="ab" style="left:10px;top:486px" width="7" height="10" viewBox="0 0 7 10"><path d="M0.5 0.5 L6 5 L0.5 9.5Z" fill="#929292"/></svg>
<svg class="ab" style="left:29px;top:485px" width="16" height="13" viewBox="0 0 16 13">
<defs><linearGradient id="fc29485" x1="0" y1="0" x2="1" y2="1"><stop offset="0" stop-color="#fff6c0"/><stop offset="0.55" stop-color="#f3cc5c"/><stop offset="1" stop-color="#d49a22"/></linearGradient></defs>
<path d="M0.5 0.5 H6.5 L7.5 2 H14.5 V11.5 H0.5Z" fill="url(#fc29485)" stroke="#7a6638" stroke-width="1"/><path d="M14.5 2 V11.5 H0.5" fill="none" stroke="#3e2e12" stroke-width="1.1"/><path d="M1.5 3 H13.5" stroke="#fff8d0" stroke-width=".8"/></svg>
<div class="t" style="left:52px;top:486.5px;font-size:11.8px;color:#1a1a1a">Indicators</div>
<svg class="ab" style="left:10px;top:504px" width="7" height="10" viewBox="0 0 7 10"><path d="M0.5 0.5 L6 5 L0.5 9.5Z" fill="#929292"/></svg>
<svg class="ab" style="left:29px;top:503px" width="16" height="13" viewBox="0 0 16 13">
<defs><linearGradient id="fc29503" x1="0" y1="0" x2="1" y2="1"><stop offset="0" stop-color="#fff6c0"/><stop offset="0.55" stop-color="#f3cc5c"/><stop offset="1" stop-color="#d49a22"/></linearGradient></defs>
<path d="M0.5 0.5 H6.5 L7.5 2 H14.5 V11.5 H0.5Z" fill="url(#fc29503)" stroke="#7a6638" stroke-width="1"/><path d="M14.5 2 V11.5 H0.5" fill="none" stroke="#3e2e12" stroke-width="1.1"/><path d="M1.5 3 H13.5" stroke="#fff8d0" stroke-width=".8"/></svg>
<div class="t" style="left:52px;top:504.5px;font-size:11.8px;color:#1a1a1a">ISA Symbols</div>
<svg class="ab" style="left:10px;top:522px" width="7" height="10" viewBox="0 0 7 10"><path d="M0.5 0.5 L6 5 L0.5 9.5Z" fill="#929292"/></svg>
<svg class="ab" style="left:29px;top:521px" width="16" height="13" viewBox="0 0 16 13">
<defs><linearGradient id="fc29521" x1="0" y1="0" x2="1" y2="1"><stop offset="0" stop-color="#fff6c0"/><stop offset="0.55" stop-color="#f3cc5c"/><stop offset="1" stop-color="#d49a22"/></linearGradient></defs>
<path d="M0.5 0.5 H6.5 L7.5 2 H14.5 V11.5 H0.5Z" fill="url(#fc29521)" stroke="#7a6638" stroke-width="1"/><path d="M14.5 2 V11.5 H0.5" fill="none" stroke="#3e2e12" stroke-width="1.1"/><path d="M1.5 3 H13.5" stroke="#fff8d0" stroke-width=".8"/></svg>
<div class="t" style="left:52px;top:522.5px;font-size:11.8px;color:#1a1a1a">Pipes</div>
<svg class="ab" style="left:10px;top:540px" width="7" height="10" viewBox="0 0 7 10"><path d="M0.5 0.5 L6 5 L0.5 9.5Z" fill="#929292"/></svg>
<svg class="ab" style="left:29px;top:539px" width="16" height="13" viewBox="0 0 16 13">
<defs><linearGradient id="fc29539" x1="0" y1="0" x2="1" y2="1"><stop offset="0" stop-color="#fff6c0"/><stop offset="0.55" stop-color="#f3cc5c"/><stop offset="1" stop-color="#d49a22"/></linearGradient></defs>
<path d="M0.5 0.5 H6.5 L7.5 2 H14.5 V11.5 H0.5Z" fill="url(#fc29539)" stroke="#7a6638" stroke-width="1"/><path d="M14.5 2 V11.5 H0.5" fill="none" stroke="#3e2e12" stroke-width="1.1"/><path d="M1.5 3 H13.5" stroke="#fff8d0" stroke-width=".8"/></svg>
<div class="t" style="left:52px;top:540.5px;font-size:11.8px;color:#1a1a1a">Gauges</div>
<svg class="ab" style="left:10px;top:558px" width="7" height="10" viewBox="0 0 7 10"><path d="M0.5 0.5 L6 5 L0.5 9.5Z" fill="#929292"/></svg>
<svg class="ab" style="left:29px;top:557px" width="16" height="13" viewBox="0 0 16 13">
<defs><linearGradient id="fc29557" x1="0" y1="0" x2="1" y2="1"><stop offset="0" stop-color="#fff6c0"/><stop offset="0.55" stop-color="#f3cc5c"/><stop offset="1" stop-color="#d49a22"/></linearGradient></defs>
<path d="M0.5 0.5 H6.5 L7.5 2 H14.5 V11.5 H0.5Z" fill="url(#fc29557)" stroke="#7a6638" stroke-width="1"/><path d="M14.5 2 V11.5 H0.5" fill="none" stroke="#3e2e12" stroke-width="1.1"/><path d="M1.5 3 H13.5" stroke="#fff8d0" stroke-width=".8"/></svg>
<div class="t" style="left:52px;top:558.5px;font-size:11.8px;color:#1a1a1a">Charts</div>
<div class="ab" style="left:2px;top:572px;width:216px;height:10px;overflow:hidden">
<div class="ab" style="left:-2px;top:-572px;width:300px;height:600px">
<svg class="ab" style="left:10px;top:576px" width="7" height="10" viewBox="0 0 7 10"><path d="M0.5 0.5 L6 5 L0.5 9.5Z" fill="#929292"/></svg>
<svg class="ab" style="left:29px;top:575px" width="16" height="13" viewBox="0 0 16 13">
<defs><linearGradient id="fc29575" x1="0" y1="0" x2="1" y2="1"><stop offset="0" stop-color="#fff6c0"/><stop offset="0.55" stop-color="#f3cc5c"/><stop offset="1" stop-color="#d49a22"/></linearGradient></defs>
<path d="M0.5 0.5 H6.5 L7.5 2 H14.5 V11.5 H0.5Z" fill="url(#fc29575)" stroke="#7a6638" stroke-width="1"/><path d="M14.5 2 V11.5 H0.5" fill="none" stroke="#3e2e12" stroke-width="1.1"/><path d="M1.5 3 H13.5" stroke="#fff8d0" stroke-width=".8"/></svg>
<div class="t" style="left:52px;top:576.5px;font-size:11.8px;color:#1a1a1a">Navigation</div>
</div></div>
<div class="ab" style="left:1px;top:587px;width:236px;height:220px;background:#fff;border:1px solid #8c8c8c"></div>
<div class="ab" style="left:2px;top:588px;width:234px;height:21px;background:#f1f1f1;border-bottom:1px solid #8e8e8e"></div>
<div class="t" style="left:6px;top:593px;font-size:12px;color:#1a1a1a">Explorer</div>
<svg class="ab" style="left:202px;top:593px" width="10" height="12" viewBox="0 0 10 12"><path d="M3 1.5 Q3 0.8 3.8 0.8 H6.2 Q7 0.8 7 1.5 V6.5" stroke="#111" stroke-width="1.2" fill="none"/><path d="M2.6 1 V6.5 H4 V1Z" fill="#111"/><path d="M1.5 6.8 H8.5" stroke="#111" stroke-width="1.4"/><path d="M5 7 V11.5" stroke="#111" stroke-width="1.2"/></svg>
<svg class="ab" style="left:220px;top:594px" width="10" height="9" viewBox="0 0 10 9"><path d="M1.8 1.3 L8.6 8 M8.6 1.3 L1.8 8" stroke="#111" stroke-width="1.7"/></svg>
<svg class="ab" style="left:9px;top:615px" width="8" height="8" viewBox="0 0 8 8"><path d="M7 0.5 V7 H0.5Z" fill="#3c3c3c"/></svg>
<svg class="ab" style="left:24px;top:614px" width="16" height="13" viewBox="0 0 16 13">
<defs><linearGradient id="fc24614" x1="0" y1="0" x2="1" y2="1"><stop offset="0" stop-color="#fff6c0"/><stop offset="0.55" stop-color="#f3cc5c"/><stop offset="1" stop-color="#d49a22"/></linearGradient></defs>
<path d="M0.5 0.5 H6.5 L7.5 2 H14.5 V11.5 H0.5Z" fill="url(#fc24614)" stroke="#7a6638" stroke-width="1"/><path d="M14.5 2 V11.5 H0.5" fill="none" stroke="#3e2e12" stroke-width="1.1"/><path d="M1.5 3 H13.5" stroke="#fff8d0" stroke-width=".8"/></svg>
<div class="t" style="left:43px;top:615px;font-size:11.8px;color:#1a1a1a">StaticSymbolProject</div>
<svg class="ab" style="left:29px;top:635px" width="8" height="8" viewBox="0 0 8 8"><path d="M7 0.5 V7 H0.5Z" fill="#3c3c3c"/></svg>
<svg class="ab" style="left:45px;top:632px" width="14" height="16" viewBox="0 0 14 16"><defs><linearGradient id="pgi" x1="0" y1="0" x2="1" y2="1"><stop offset="0" stop-color="#ffffff"/><stop offset="1" stop-color="#d8e2f0"/></linearGradient></defs><path d="M0.5 0.5 H9 L13.5 5 V15.5 H0.5Z" fill="url(#pgi)" stroke="#7a8aa0"/><path d="M9 0.5 V5 H13.5" fill="none" stroke="#7a8aa0"/></svg>
<div class="t" style="left:63px;top:635px;font-size:11.8px;color:#1a1a1a">Page</div>
<div class="ab" style="left:62px;top:649px;width:174px;height:20px;background:linear-gradient(#f8f8f8,#ededed);border:1px solid #d4d4d4"></div>
<svg class="ab" style="left:64px;top:653px" width="17" height="14" viewBox="0 0 17 14"><rect x="0" y="1" width="9" height="6" fill="#18a030"/><rect x="8.8" y="2.2" width="7" height="6.4" fill="#d83010"/><path d="M4 5 L12 7.5 L10.5 12 L2.5 9.5Z" fill="#1f72b8"/></svg>
<div class="t" style="left:83px;top:655px;font-size:11.8px;color:#1a1a1a">StaticSymbol</div>
<div class="ab" style="left:237px;top:132px;width:4px;height:662px;background:#c0c0c0"></div>
<div class="ab" style="left:241px;top:158px;width:842px;height:636px;background:#fff"></div>
<div class="ab" style="left:241px;top:135px;width:38px;height:24px;background:linear-gradient(#fffef8,#ffffff);border:1px solid #e6d48a;border-bottom:none;border-radius:2px 2px 0 0"></div>
<div class="t" style="left:247px;top:142px;font-size:11px;color:#151515">Page</div>
<div class="ab" style="left:279px;top:157px;width:804px;height:1px;background:#9a9a9a"></div>
<div class="ab" style="left:241px;top:160px;width:842px;height:1px;background:#ececec"></div>
<div class="ab" style="left:241px;top:159px;width:1px;height:635px;background:#9a9a9a"></div>
<div class="ab" style="left:1067px;top:162px;width:16px;height:632px;background:#808080"></div>
<div class="ab" style="left:246px;top:783px;width:837px;height:11px;background:#808080"></div>
<div class="ab" style="left:246px;top:162px;width:21px;height:21px;background:#808080"></div>
<svg class="ab" style="left:246px;top:162px" width="821" height="621" viewBox="0 0 821 621" shape-rendering="crispEdges">
<rect x="21" y="0" width="800" height="21" fill="#fff"/>
<rect x="0" y="21" width="21" height="600" fill="#fff"/>
<rect x="71" y="21" width="1" height="600" fill="#e2e2e2"/>
<rect x="121" y="21" width="1" height="600" fill="#e2e2e2"/>
<rect x="171" y="21" width="1" height="600" fill="#e2e2e2"/>
<rect x="221" y="21" width="1" height="600" fill="#e2e2e2"/>
<rect x="271" y="21" width="1" height="600" fill="#e2e2e2"/>
<rect x="321" y="21" width="1" height="600" fill="#e2e2e2"/>
<rect x="371" y="21" width="1" height="600" fill="#e2e2e2"/>
<rect x="421" y="21" width="1" height="600" fill="#e2e2e2"/>
<rect x="471" y="21" width="1" height="600" fill="#e2e2e2"/>
<rect x="521" y="21" width="1" height="600" fill="#e2e2e2"/>
<rect x="571" y="21" width="1" height="600" fill="#e2e2e2"/>
<rect x="621" y="21" width="1" height="600" fill="#e2e2e2"/>
<rect x="671" y="21" width="1" height="600" fill="#e2e2e2"/>
<rect x="721" y="21" width="1" height="600" fill="#e2e2e2"/>
<rect x="771" y="21" width="1" height="600" fill="#e2e2e2"/>
<rect x="21" y="71" width="800" height="1" fill="#e2e2e2"/>
<rect x="21" y="121" width="800" height="1" fill="#e2e2e2"/>
<rect x="21" y="171" width="800" height="1" fill="#e2e2e2"/>
<rect x="21" y="221" width="800" height="1" fill="#e2e2e2"/>
<rect x="21" y="271" width="800" height="1" fill="#e2e2e2"/>
<rect x="21" y="321" width="800" height="1" fill="#e2e2e2"/>
<rect x="21" y="371" width="800" height="1" fill="#e2e2e2"/>
<rect x="21" y="421" width="800" height="1" fill="#e2e2e2"/>
<rect x="21" y="471" width="800" height="1" fill="#e2e2e2"/>
<rect x="21" y="521" width="800" height="1" fill="#e2e2e2"/>
<rect x="21" y="571" width="800" height="1" fill="#e2e2e2"/>
<rect x="21" y="0" width="800" height="1" fill="#5a5a5a"/>
<rect x="21" y="20" width="800" height="1" fill="#c4c4c4"/>
<rect x="0" y="21" width="1" height="600" fill="#7a7a7a"/>
<rect x="20" y="21" width="1" height="600" fill="#bdbdbd"/>
<rect x="20" y="0" width="2" height="10" fill="#555"/>
<rect x="33" y="0" width="1" height="4" fill="#555"/>
<rect x="45" y="0" width="2" height="7" fill="#5a5a5a"/>
<rect x="58" y="0" width="1" height="4" fill="#555"/>
<rect x="70" y="0" width="2" height="10" fill="#555"/>
<rect x="83" y="0" width="1" height="4" fill="#555"/>
<rect x="95" y="0" width="2" height="7" fill="#5a5a5a"/>
<rect x="108" y="0" width="1" height="4" fill="#555"/>
<rect x="120" y="0" width="2" height="10" fill="#555"/>
<rect x="133" y="0" width="1" height="4" fill="#555"/>
<rect x="145" y="0" width="2" height="7" fill="#5a5a5a"/>
<rect x="158" y="0" width="1" height="4" fill="#555"/>
<rect x="170" y="0" width="2" height="10" fill="#555"/>
<rect x="183" y="0" width="1" height="4" fill="#555"/>
<rect x="195" y="0" width="2" height="7" fill="#5a5a5a"/>
<rect x="208" y="0" width="1" height="4" fill="#555"/>
<rect x="220" y="0" width="2" height="10" fill="#555"/>
<rect x="233" y="0" width="1" height="4" fill="#555"/>
<rect x="245" y="0" width="2" height="7" fill="#5a5a5a"/>
<rect x="258" y="0" width="1" height="4" fill="#555"/>
<rect x="270" y="0" width="2" height="10" fill="#555"/>
<rect x="283" y="0" width="1" height="4" fill="#555"/>
<rect x="295" y="0" width="2" height="7" fill="#5a5a5a"/>
<rect x="308" y="0" width="1" height="4" fill="#555"/>
<rect x="320" y="0" width="2" height="10" fill="#555"/>
<rect x="333" y="0" width="1" height="4" fill="#555"/>
<rect x="345" y="0" width="2" height="7" fill="#5a5a5a"/>
<rect x="358" y="0" width="1" height="4" fill="#555"/>
<rect x="370" y="0" width="2" height="10" fill="#555"/>
<rect x="383" y="0" width="1" height="4" fill="#555"/>
<rect x="395" y="0" width="2" height="7" fill="#5a5a5a"/>
<rect x="408" y="0" width="1" height="4" fill="#555"/>
<rect x="420" y="0" width="2" height="10" fill="#555"/>
<rect x="433" y="0" width="1" height="4" fill="#555"/>
<rect x="445" y="0" width="2" height="7" fill="#5a5a5a"/>
<rect x="458" y="0" width="1" height="4" fill="#555"/>
<rect x="470" y="0" width="2" height="10" fill="#555"/>
<rect x="483" y="0" width="1" height="4" fill="#555"/>
<rect x="495" y="0" width="2" height="7" fill="#5a5a5a"/>
<rect x="508" y="0" width="1" height="4" fill="#555"/>
<rect x="520" y="0" width="2" height="10" fill="#555"/>
<rect x="533" y="0" width="1" height="4" fill="#555"/>
<rect x="545" y="0" width="2" height="7" fill="#5a5a5a"/>
<rect x="558" y="0" width="1" height="4" fill="#555"/>
<rect x="570" y="0" width="2" height="10" fill="#555"/>
<rect x="583" y="0" width="1" height="4" fill="#555"/>
<rect x="595" y="0" width="2" height="7" fill="#5a5a5a"/>
<rect x="608" y="0" width="1" height="4" fill="#555"/>
<rect x="620" y="0" width="2" height="10" fill="#555"/>
<rect x="633" y="0" width="1" height="4" fill="#555"/>
<rect x="645" y="0" width="2" height="7" fill="#5a5a5a"/>
<rect x="658" y="0" width="1" height="4" fill="#555"/>
<rect x="670" y="0" width="2" height="10" fill="#555"/>
<rect x="683" y="0" width="1" height="4" fill="#555"/>
<rect x="695" y="0" width="2" height="7" fill="#5a5a5a"/>
<rect x="708" y="0" width="1" height="4" fill="#555"/>
<rect x="720" y="0" width="2" height="10" fill="#555"/>
<rect x="733" y="0" width="1" height="4" fill="#555"/>
<rect x="745" y="0" width="2" height="7" fill="#5a5a5a"/>
<rect x="758" y="0" width="1" height="4" fill="#555"/>
<rect x="770" y="0" width="2" height="10" fill="#555"/>
<rect x="783" y="0" width="1" height="4" fill="#555"/>
<rect x="795" y="0" width="2" height="7" fill="#5a5a5a"/>
<rect x="808" y="0" width="1" height="4" fill="#555"/>
<rect x="18" y="33" width="3" height="1" fill="#5a5a5a"/>
<rect x="14" y="45" width="7" height="2" fill="#6c6c6c"/>
<rect x="18" y="58" width="3" height="1" fill="#5a5a5a"/>
<rect x="11" y="70" width="10" height="2" fill="#666"/>
<rect x="18" y="83" width="3" height="1" fill="#5a5a5a"/>
<rect x="14" y="95" width="7" height="2" fill="#6c6c6c"/>
<rect x="18" y="108" width="3" height="1" fill="#5a5a5a"/>
<rect x="11" y="120" width="10" height="2" fill="#666"/>
<rect x="18" y="133" width="3" height="1" fill="#5a5a5a"/>
<rect x="14" y="145" width="7" height="2" fill="#6c6c6c"/>
<rect x="18" y="158" width="3" height="1" fill="#5a5a5a"/>
<rect x="11" y="170" width="10" height="2" fill="#666"/>
<rect x="18" y="183" width="3" height="1" fill="#5a5a5a"/>
<rect x="14" y="195" width="7" height="2" fill="#6c6c6c"/>
<rect x="18" y="208" width="3" height="1" fill="#5a5a5a"/>
<rect x="11" y="220" width="10" height="2" fill="#666"/>
<rect x="18" y="233" width="3" height="1" fill="#5a5a5a"/>
<rect x="14" y="245" width="7" height="2" fill="#6c6c6c"/>
<rect x="18" y="258" width="3" height="1" fill="#5a5a5a"/>
<rect x="11" y="270" width="10" height="2" fill="#666"/>
<rect x="18" y="283" width="3" height="1" fill="#5a5a5a"/>
<rect x="14" y="295" width="7" height="2" fill="#6c6c6c"/>
<rect x="18" y="308" width="3" height="1" fill="#5a5a5a"/>
<rect x="11" y="320" width="10" height="2" fill="#666"/>
<rect x="18" y="333" width="3" height="1" fill="#5a5a5a"/>
<rect x="14" y="345" width="7" height="2" fill="#6c6c6c"/>
<rect x="18" y="358" width="3" height="1" fill="#5a5a5a"/>
<rect x="11" y="370" width="10" height="2" fill="#666"/>
<rect x="18" y="383" width="3" height="1" fill="#5a5a5a"/>
<rect x="14" y="395" width="7" height="2" fill="#6c6c6c"/>
<rect x="18" y="408" width="3" height="1" fill="#5a5a5a"/>
<rect x="11" y="420" width="10" height="2" fill="#666"/>
<rect x="18" y="433" width="3" height="1" fill="#5a5a5a"/>
<rect x="14" y="445" width="7" height="2" fill="#6c6c6c"/>
<rect x="18" y="458" width="3" height="1" fill="#5a5a5a"/>
<rect x="11" y="470" width="10" height="2" fill="#666"/>
<rect x="18" y="483" width="3" height="1" fill="#5a5a5a"/>
<rect x="14" y="495" width="7" height="2" fill="#6c6c6c"/>
<rect x="18" y="508" width="3" height="1" fill="#5a5a5a"/>
<rect x="11" y="520" width="10" height="2" fill="#666"/>
<rect x="18" y="533" width="3" height="1" fill="#5a5a5a"/>
<rect x="14" y="545" width="7" height="2" fill="#6c6c6c"/>
<rect x="18" y="558" width="3" height="1" fill="#5a5a5a"/>
<rect x="11" y="570" width="10" height="2" fill="#666"/>
<rect x="18" y="583" width="3" height="1" fill="#5a5a5a"/>
<rect x="14" y="595" width="7" height="2" fill="#6c6c6c"/>
<rect x="18" y="608" width="3" height="1" fill="#5a5a5a"/>
<rect x="570" y="0" width="1" height="21" fill="#c03030"/>
<rect x="0" y="171" width="21" height="1" fill="#c03030"/>
</svg>
<div class="t" style="left:302px;width:30px;text-align:center;top:174px;font-size:8.5px;letter-spacing:-0.3px;color:#3a3a3a">50</div>
<div class="t" style="left:352px;width:30px;text-align:center;top:174px;font-size:8.5px;letter-spacing:-0.3px;color:#3a3a3a">100</div>
<div class="t" style="left:402px;width:30px;text-align:center;top:174px;font-size:8.5px;letter-spacing:-0.3px;color:#3a3a3a">150</div>
<div class="t" style="left:452px;width:30px;text-align:center;top:174px;font-size:8.5px;letter-spacing:-0.3px;color:#3a3a3a">200</div>
<div class="t" style="left:502px;width:30px;text-align:center;top:174px;font-size:8.5px;letter-spacing:-0.3px;color:#3a3a3a">250</div>
<div class="t" style="left:552px;width:30px;text-align:center;top:174px;font-size:8.5px;letter-spacing:-0.3px;color:#3a3a3a">300</div>
<div class="t" style="left:602px;width:30px;text-align:center;top:174px;font-size:8.5px;letter-spacing:-0.3px;color:#3a3a3a">350</div>
<div class="t" style="left:652px;width:30px;text-align:center;top:174px;font-size:8.5px;letter-spacing:-0.3px;color:#3a3a3a">400</div>
<div class="t" style="left:702px;width:30px;text-align:center;top:174px;font-size:8.5px;letter-spacing:-0.3px;color:#3a3a3a">450</div>
<div class="t" style="left:752px;width:30px;text-align:center;top:174px;font-size:8.5px;letter-spacing:-0.3px;color:#3a3a3a">500</div>
<div class="t" style="left:802px;width:30px;text-align:center;top:174px;font-size:8.5px;letter-spacing:-0.3px;color:#3a3a3a">550</div>
<div class="t" style="left:852px;width:30px;text-align:center;top:174px;font-size:8.5px;letter-spacing:-0.3px;color:#3a3a3a">600</div>
<div class="t" style="left:902px;width:30px;text-align:center;top:174px;font-size:8.5px;letter-spacing:-0.3px;color:#3a3a3a">650</div>
<div class="t" style="left:952px;width:30px;text-align:center;top:174px;font-size:8.5px;letter-spacing:-0.3px;color:#3a3a3a">700</div>
<div class="t" style="left:1002px;width:30px;text-align:center;top:174px;font-size:8.5px;letter-spacing:-0.3px;color:#3a3a3a">750</div>
<div class="t" style="left:237px;width:30px;text-align:center;top:228px;font-size:8.5px;letter-spacing:-0.3px;color:#3a3a3a;transform:rotate(90deg)">50</div>
<div class="t" style="left:237px;width:30px;text-align:center;top:278px;font-size:8.5px;letter-spacing:-0.3px;color:#3a3a3a;transform:rotate(90deg)">100</div>
<div class="t" style="left:237px;width:30px;text-align:center;top:328px;font-size:8.5px;letter-spacing:-0.3px;color:#3a3a3a;transform:rotate(90deg)">150</div>
<div class="t" style="left:237px;width:30px;text-align:center;top:378px;font-size:8.5px;letter-spacing:-0.3px;color:#3a3a3a;transform:rotate(90deg)">200</div>
<div class="t" style="left:237px;width:30px;text-align:center;top:428px;font-size:8.5px;letter-spacing:-0.3px;color:#3a3a3a;transform:rotate(90deg)">250</div>
<div class="t" style="left:237px;width:30px;text-align:center;top:478px;font-size:8.5px;letter-spacing:-0.3px;color:#3a3a3a;transform:rotate(90deg)">300</div>
<div class="t" style="left:237px;width:30px;text-align:center;top:528px;font-size:8.5px;letter-spacing:-0.3px;color:#3a3a3a;transform:rotate(90deg)">350</div>
<div class="t" style="left:237px;width:30px;text-align:center;top:578px;font-size:8.5px;letter-spacing:-0.3px;color:#3a3a3a;transform:rotate(90deg)">400</div>
<div class="t" style="left:237px;width:30px;text-align:center;top:628px;font-size:8.5px;letter-spacing:-0.3px;color:#3a3a3a;transform:rotate(90deg)">450</div>
<div class="t" style="left:237px;width:30px;text-align:center;top:678px;font-size:8.5px;letter-spacing:-0.3px;color:#3a3a3a;transform:rotate(90deg)">500</div>
<div class="t" style="left:237px;width:30px;text-align:center;top:728px;font-size:8.5px;letter-spacing:-0.3px;color:#3a3a3a;transform:rotate(90deg)">550</div>
<svg class="ab" style="left:0;top:0" width="1083" height="794" viewBox="0 0 1083 794">
<rect x="321.5" y="209.5" width="345" height="323" fill="#e6eef9" fill-opacity="0.5" stroke="#7391b4" stroke-width="1"/>
<rect x="322.5" y="263" width="199.5" height="140" fill="#3fba5d"/>
<rect x="522" y="289" width="143" height="140" fill="#d35f3f"/>
<path d="M414.2 307.6 L599.8 382.6 L548.1 511.8 L362 437.2 Z" fill="#3c92c0"/>
<g fill="#000" fill-opacity="0.2">
<circle cx="321" cy="209" r="15"/><circle cx="667" cy="209" r="15"/><circle cx="321" cy="533" r="15"/><circle cx="667" cy="533" r="15"/></g>
<g fill="#000"><rect x="316" y="204" width="10" height="10"/><rect x="662" y="204" width="10" height="10"/><rect x="316" y="528" width="10" height="10"/><rect x="662" y="528" width="10" height="10"/></g>
</svg>
</body></html>
